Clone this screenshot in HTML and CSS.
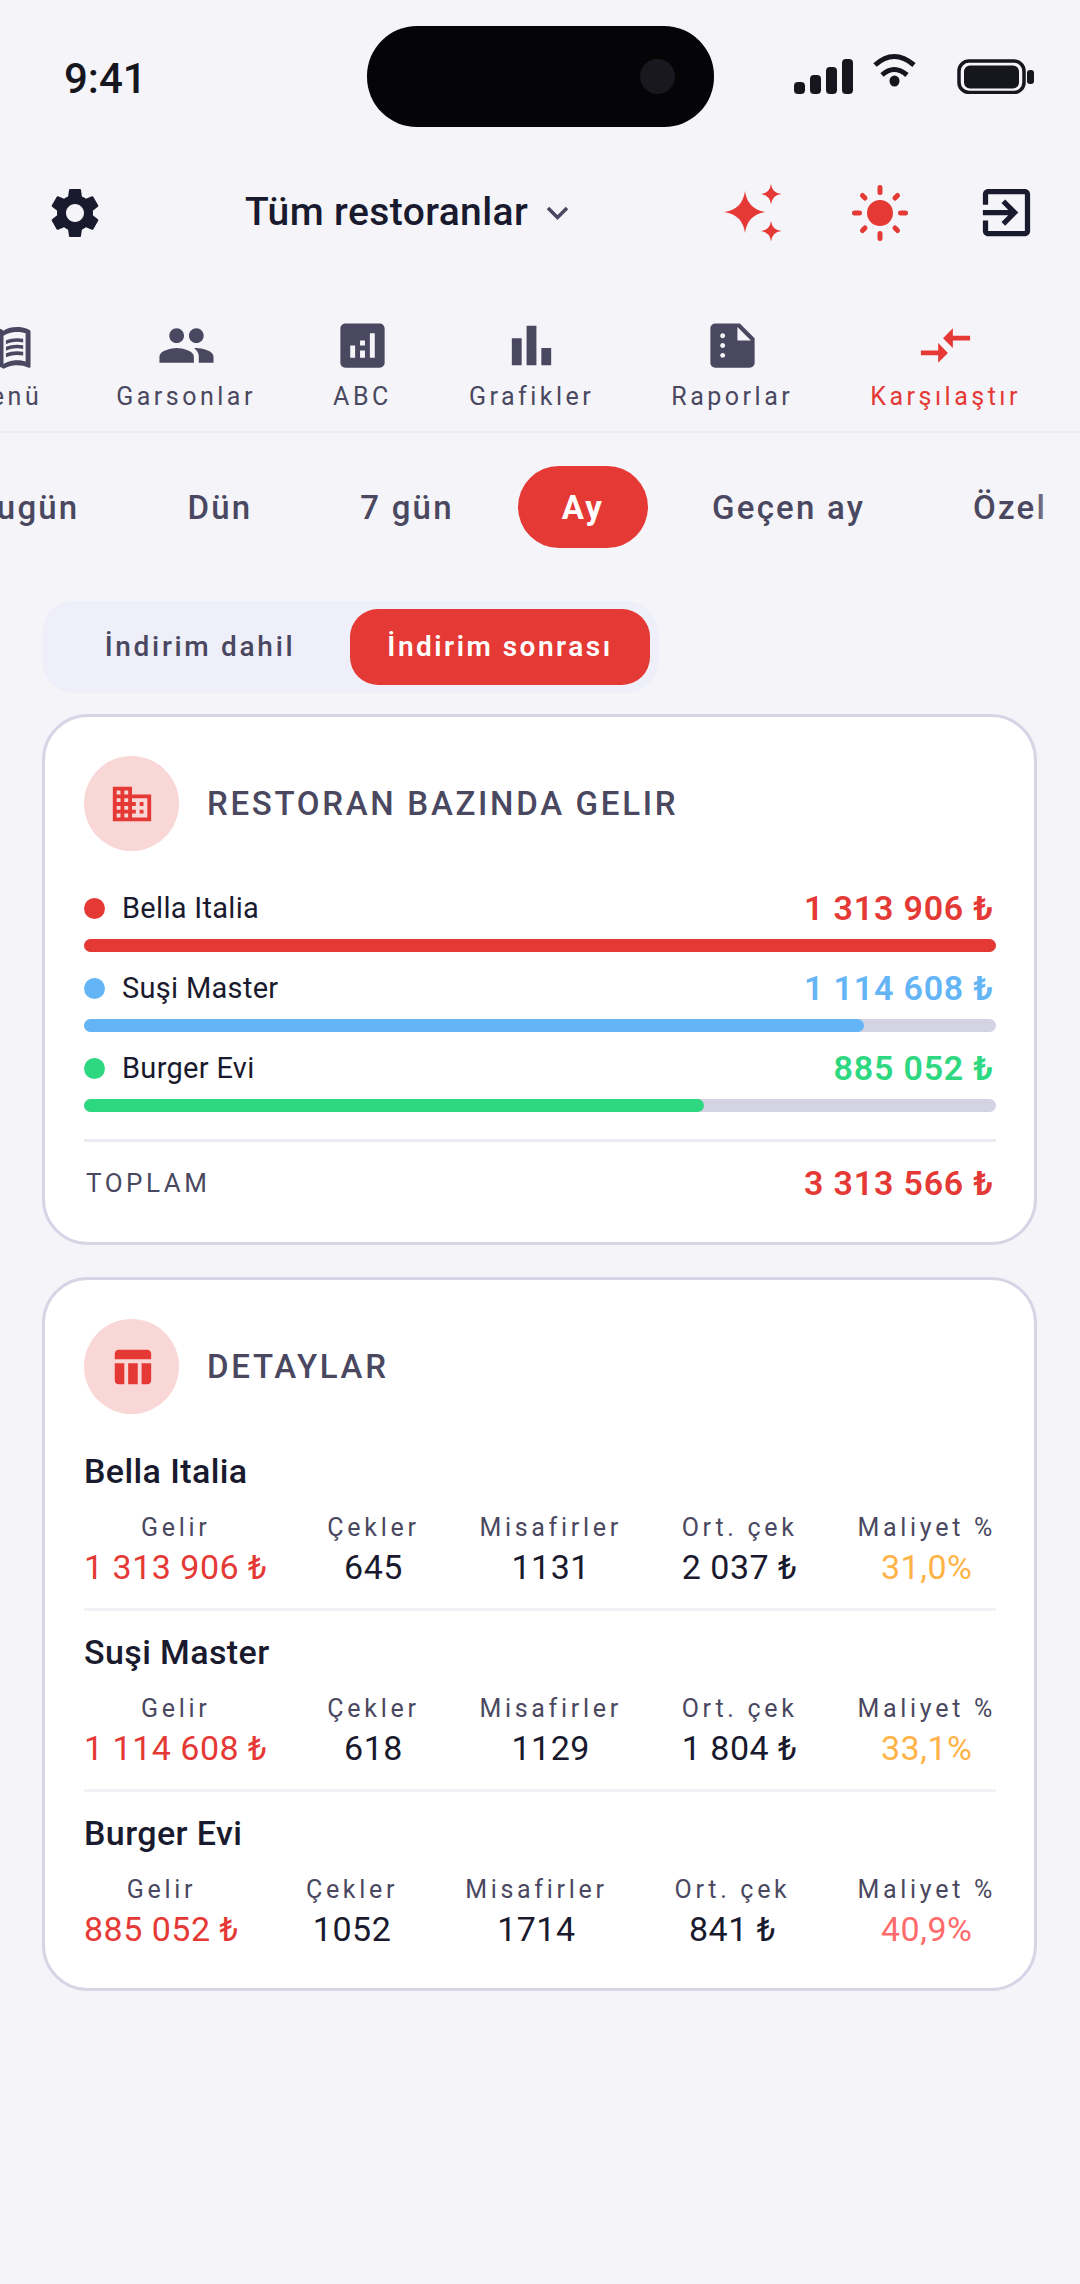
FILE: index.html

```html
<!DOCTYPE html>
<html lang="tr">
<head>
  <meta charset="UTF-8" />
  <meta name="viewport" content="width=device-width, initial-scale=1.0"/>
  <title>Karşılaştır</title>
  <link rel="stylesheet" href="styles.css">
</head>
<body>
  <div class="status">
    <div class="time">9:41</div>
    <div class="island"><span class="camera"></span></div>
    <svg class="status-icons" width="240" height="42" viewBox="0 0 240 42">
      <rect x="0" y="30" width="11" height="12" rx="4"/>
      <rect x="16" y="23" width="11" height="19" rx="4"/>
      <rect x="32" y="15" width="11" height="27" rx="4"/>
      <rect x="48" y="7" width="11" height="35" rx="4"/>
      <path d="M81 13 Q100 -4 120 13 M88 23 Q100 12 113 23" fill="none" stroke="#16161f" stroke-width="5"/>
      <ellipse cx="100.500" cy="29" rx="5" ry="5.500"/>
      <rect x="165" y="9" width="65" height="31.500" rx="10" fill="none" stroke="#16161f" stroke-width="3.500"/>
      <rect x="170" y="13.500" width="55" height="23" rx="6"/>
      <rect x="233" y="18" width="7" height="14" rx="3"/>
    </svg>
  </div>

  <div class="topbar">
    <svg class="icon-gear" viewBox="0 0 24 24"><path d="M19.14 12.94c.04-.3.06-.61.06-.94 0-.32-.02-.64-.07-.94l2.03-1.58c.18-.14.23-.41.12-.61l-1.92-3.32c-.12-.22-.37-.29-.59-.22l-2.39.96c-.5-.38-1.03-.7-1.62-.94l-.36-2.54c-.04-.24-.24-.41-.48-.41h-3.84c-.24 0-.43.17-.47.41l-.36 2.54c-.59.24-1.13.57-1.62.94l-2.39-.96c-.22-.08-.47 0-.59.22L2.74 8.87c-.12.21-.08.47.12.61l2.03 1.58c-.05.3-.09.63-.09.94s.02.64.07.94l-2.03 1.58c-.18.14-.23.41-.12.61l1.92 3.32c.12.22.37.29.59.22l2.39-.96c.5.38 1.03.7 1.62.94l.36 2.54c.05.24.24.41.48.41h3.84c.24 0 .44-.17.47-.41l.36-2.54c.59-.24 1.13-.56 1.62-.94l2.39.96c.22.08.47 0 .59-.22l1.92-3.32c.12-.22.07-.47-.12-.61l-2.01-1.58zM12 15.6c-1.98 0-3.6-1.62-3.6-3.6s1.62-3.6 3.6-3.6 3.6 1.62 3.6 3.6-1.62 3.6-3.6 3.6z"/></svg>
    <div class="picker">
      <span>Tüm restoranlar</span>
      <svg class="chevron" width="23" height="14" viewBox="0 0 23 14"><path d="M2 2 L11.500 11.500 L21 2" fill="none" stroke="#4a4860" stroke-width="3.500"/></svg>
    </div>
    <svg class="icon-sparkle" width="58" height="58" viewBox="0 0 58 58">
      <path d="M21 7 Q23.500 25.500 42 28 Q23.500 30.500 21 49 Q18.500 30.500 0 28 Q18.500 25.500 21 7Z"/>
      <path d="M47 0 Q48 9 57.500 10 Q48 11 47 20.500 Q46 11 36.500 10 Q46 9 47 0Z"/>
      <path d="M47 37 Q48 46 57.500 47 Q48 48 47 57.500 Q46 48 36.500 47 Q46 46 47 37Z"/>
    </svg>
    <svg class="icon-sun" width="58" height="58" viewBox="0 0 58 58">
      <circle cx="29" cy="29" r="13"/>
      <path d="M29 3.500v5M29 49.500v5M3.500 29h5M49.500 29h5M11.500 11.500l2.500 2.500M44 44l2.500 2.500M11.500 46.500l2.500-2.500M44 14l2.500-2.500" fill="none" stroke="#e53935" stroke-width="5" stroke-linecap="round"/>
    </svg>
    <svg class="icon-exit" viewBox="0 0 24 24"><path d="M10.090 15.590L11.500 17l5-5-5-5-1.410 1.410L12.670 11H3v2h9.670l-2.580 2.590zM19 3H5c-1.110 0-2 .9-2 2v4h2V5h14v14H5v-4H3v4c0 1.100.89 2 2 2h14c1.100 0 2-.9 2-2V5c0-1.100-.9-2-2-2z"/></svg>
  </div>

  <div class="nav">
    <div class="nav-item">
      <svg viewBox="0 0 24 24"><path d="M21 5c-1.110-.35-2.330-.5-3.500-.5-1.950 0-4.050.4-5.500 1.500-1.450-1.100-3.550-1.500-5.500-1.500S2.450 4.900 1 6v14.650c0 .25.25.5.5.5.1 0 .15-.05.25-.05C3.100 20.450 5.050 20 6.500 20c1.950 0 4.050.4 5.500 1.500 1.350-.85 3.800-1.500 5.500-1.500 1.650 0 3.350.3 4.750 1.050.1.05.15.05.25.05.25 0 .5-.25.5-.5V6c-.6-.45-1.250-.75-2-1zm0 13.500c-1.100-.35-2.300-.5-3.500-.5-1.700 0-4.150.65-5.500 1.500V8c1.350-.85 3.800-1.500 5.500-1.500 1.200 0 2.400.15 3.500.5v11.500z"/><path d="M17.500 10.500c.88 0 1.730.09 2.500.26V9.240c-.79-.15-1.640-.24-2.500-.24-1.700 0-3.240.29-4.500.83v1.660c1.130-.64 2.700-.99 4.500-.99zM13 12.490v1.660c1.130-.64 2.700-.99 4.500-.99.88 0 1.730.09 2.500.26V11.900c-.79-.15-1.640-.24-2.500-.24-1.700 0-3.240.3-4.500.83zM17.500 14.330c-1.700 0-3.240.29-4.500.83v1.660c1.130-.64 2.700-.99 4.500-.99.88 0 1.730.09 2.500.26v-1.520c-.79-.16-1.640-.24-2.500-.24z"/></svg>
      <span>Menü</span>
    </div>
    <div class="nav-item">
      <svg viewBox="0 0 24 24"><path d="M16 11c1.660 0 2.990-1.340 2.990-3S17.660 5 16 5c-1.660 0-3 1.340-3 3s1.340 3 3 3zm-8 0c1.660 0 2.990-1.340 2.990-3S9.660 5 8 5C6.340 5 5 6.340 5 8s1.340 3 3 3zm0 2c-2.330 0-7 1.170-7 3.500V19h14v-2.500c0-2.330-4.670-3.500-7-3.500zm8 0c-.29 0-.62.02-.97.05 1.160.84 1.970 1.970 1.970 3.450V19h6v-2.500c0-2.330-4.670-3.500-7-3.500z"/></svg>
      <span>Garsonlar</span>
    </div>
    <div class="nav-item">
      <svg viewBox="0 0 24 24"><path d="M19 3H5c-1.100 0-2 .9-2 2v14c0 1.100.9 2 2 2h14c1.100 0 2-.9 2-2V5c0-1.100-.9-2-2-2zM9 17H7v-5h2v5zm4 0h-2v-3h2v3zm0-5h-2v-2h2v2zm4 5h-2V7h2v10z"/></svg>
      <span>ABC</span>
    </div>
    <div class="nav-item">
      <svg viewBox="0 0 24 24"><path d="M4 9h4v11H4zM16 13h4v7h-4zM10 4h4v16h-4z"/></svg>
      <span>Grafikler</span>
    </div>
    <div class="nav-item">
      <svg viewBox="0 0 24 24"><path d="M15 3H5c-1.100 0-1.990.9-1.990 2L3 19c0 1.100.89 2 1.990 2H19c1.100 0 2-.9 2-2V9l-6-6zM8 17c-.55 0-1-.45-1-1s.45-1 1-1 1 .45 1 1-.45 1-1 1zm0-4c-.55 0-1-.45-1-1s.45-1 1-1 1 .45 1 1-.45 1-1 1zm0-4c-.55 0-1-.45-1-1s.45-1 1-1 1 .45 1 1-.45 1-1 1zm6 1V4.500l5.500 5.500H14z"/></svg>
      <span>Raporlar</span>
    </div>
    <div class="nav-item active">
      <svg viewBox="0 0 24 24"><path d="M9.010 14H2v2h7.010v3L13 15l-3.990-4v3zm5.980-1v-3H22V8h-7.010V5L11 9l3.990 4z"/></svg>
      <span>Karşılaştır</span>
    </div>
  </div>

  <div class="periods">
    <div class="period">Bugün</div>
    <div class="period">Dün</div>
    <div class="period">7 gün</div>
    <div class="period active">Ay</div>
    <div class="period">Geçen ay</div>
    <div class="period">Özel</div>
  </div>

  <div class="toggle">
    <div class="toggle-btn">İndirim dahil</div>
    <div class="toggle-btn active">İndirim sonrası</div>
  </div>

  <div class="card">
    <div class="card-head">
      <div class="card-icon">
        <svg viewBox="0 0 24 24"><path d="M12 7V3H2v18h20V7H12zM6 19H4v-2h2v2zm0-4H4v-2h2v2zm0-4H4V9h2v2zm0-4H4V5h2v2zm4 12H8v-2h2v2zm0-4H8v-2h2v2zm0-4H8V9h2v2zm0-4H8V5h2v2zm10 12h-8v-2h2v-2h-2v-2h2v-2h-2V9h8v10zm-2-8h-2v2h2v-2zm0 4h-2v2h2v-2z"/></svg>
      </div>
      <h2>RESTORAN BAZINDA GELIR</h2>
    </div>
    <div class="rows">
      <div class="row red">
        <div class="row-top"><span class="dot"></span><span class="row-name">Bella Italia</span><span class="row-value">1 313 906 ₺</span></div>
        <div class="track"><div class="fill" style="width: 100%"></div></div>
      </div>
      <div class="row blue">
        <div class="row-top"><span class="dot"></span><span class="row-name">Suşi Master</span><span class="row-value">1 114 608 ₺</span></div>
        <div class="track"><div class="fill" style="width: 85.500%"></div></div>
      </div>
      <div class="row green">
        <div class="row-top"><span class="dot"></span><span class="row-name">Burger Evi</span><span class="row-value">885 052 ₺</span></div>
        <div class="track"><div class="fill" style="width: 68%"></div></div>
      </div>
    </div>
    <div class="total">
      <span class="total-label">TOPLAM</span>
      <span class="total-value">3 313 566 ₺</span>
    </div>
  </div>

  <div class="card">
    <div class="card-head">
      <div class="card-icon">
        <svg viewBox="0 0 24 24"><path d="M10 10.020h5V21h-5zM17 21h3c1.100 0 2-.9 2-2v-9h-5v11zm3-18H5c-1.100 0-2 .9-2 2v3h19V5c0-1.100-.9-2-2-2zM3 19c0 1.100.9 2 2 2h3V10H3v9z"/></svg>
      </div>
      <h2>DETAYLAR</h2>
    </div>

    <div class="group">
      <h3>Bella Italia</h3>
      <div class="stats">
        <div class="stat"><span class="stat-label">Gelir</span><span class="stat-value money">1 313 906 ₺</span></div>
        <div class="stat"><span class="stat-label">Çekler</span><span class="stat-value">645</span></div>
        <div class="stat"><span class="stat-label">Misafirler</span><span class="stat-value">1131</span></div>
        <div class="stat"><span class="stat-label">Ort. çek</span><span class="stat-value">2 037 ₺</span></div>
        <div class="stat"><span class="stat-label">Maliyet %</span><span class="stat-value warn">31,0%</span></div>
      </div>
    </div>
    <div class="group">
      <h3>Suşi Master</h3>
      <div class="stats">
        <div class="stat"><span class="stat-label">Gelir</span><span class="stat-value money">1 114 608 ₺</span></div>
        <div class="stat"><span class="stat-label">Çekler</span><span class="stat-value">618</span></div>
        <div class="stat"><span class="stat-label">Misafirler</span><span class="stat-value">1129</span></div>
        <div class="stat"><span class="stat-label">Ort. çek</span><span class="stat-value">1 804 ₺</span></div>
        <div class="stat"><span class="stat-label">Maliyet %</span><span class="stat-value warn">33,1%</span></div>
      </div>
    </div>
    <div class="group">
      <h3>Burger Evi</h3>
      <div class="stats">
        <div class="stat"><span class="stat-label">Gelir</span><span class="stat-value money">885 052 ₺</span></div>
        <div class="stat"><span class="stat-label">Çekler</span><span class="stat-value">1052</span></div>
        <div class="stat"><span class="stat-label">Misafirler</span><span class="stat-value">1714</span></div>
        <div class="stat"><span class="stat-label">Ort. çek</span><span class="stat-value">841 ₺</span></div>
        <div class="stat"><span class="stat-label">Maliyet %</span><span class="stat-value bad">40,9%</span></div>
      </div>
    </div>
  </div>
</body>
</html>
```

FILE: styles.css

```css
* {
  box-sizing: border-box;
}
html, body {
  overflow: hidden;
}
body {
  margin: 0;
  width: 1080px;
  height: 2284px;
  background-color: #f4f4f9;
  color: #1a1a2e;
  font-family: Roboto, "Liberation Sans", sans-serif;
}

/* status bar */
.status {
  display: flex;
  align-items: flex-start;
  height: 155px;
  padding: 26px 0 0 64px;
}
.time {
  width: 303px;
  height: 101px;
  line-height: 106px;
  font-size: 42px;
  font-weight: 500;
  color: #16161f;
}
.island {
  display: flex;
  align-items: center;
  justify-content: flex-end;
  width: 347px;
  height: 101px;
  padding-right: 39px;
  border-radius: 50px;
  background-color: #050507;
}
.camera {
  width: 35px;
  height: 35px;
  border-radius: 50%;
  background-color: #18181e;
}
.status-icons {
  margin: 26px 0 0 80px;
  fill: #16161f;
}

/* top bar */
.topbar {
  display: flex;
  align-items: center;
  height: 115px;
  padding-left: 45px;
}
.icon-gear {
  width: 60px;
  height: 60px;
  fill: #1a1a2e;
}
.picker {
  display: flex;
  align-items: center;
  gap: 18px;
  margin-left: 140px;
  margin-top: -2px;
  width: 479px;
  font-size: 39px;
  font-weight: 500;
  letter-spacing: 0.400px;
}
.chevron {
  margin-top: 2px;
}
.icon-sparkle, .icon-sun {
  fill: #e53935;
}
.icon-sun {
  margin-left: 69px;
}
.icon-exit {
  width: 63px;
  height: 63px;
  margin-left: 66px;
  fill: #1a1a2e;
}

/* nav tabs */
.nav {
  display: flex;
  justify-content: flex-end;
  gap: 77px;
  height: 163px;
  padding: 46px 59px 0 0;
  border-bottom: 2px solid #ecebf4;
  overflow: hidden;
}
.nav-item {
  display: flex;
  flex-direction: column;
  align-items: center;
  flex-shrink: 0;
  gap: 7px;
  color: #4a4860;
  font-size: 25px;
  line-height: 30px;
  letter-spacing: 3.500px;
}
.nav-item:first-child {
  margin-right: -3px;
}
.nav-item svg {
  width: 59px;
  height: 59px;
  fill: #4a4860;
}
.nav-item.active {
  color: #e53935;
}
.nav-item.active svg {
  fill: #e53935;
}

/* period tabs */
.periods {
  position: relative;
  display: flex;
  justify-content: flex-end;
  gap: 20px;
  padding: 33px 0 0;
  margin-right: -11px;
  overflow: hidden;
}
.periods::after {
  content: "";
  position: absolute;
  top: 0;
  right: 0;
  bottom: 0;
  width: 60px;
  background: linear-gradient(to right, rgba(244, 244, 249, 0), #f4f4f9 80%);
}
.period {
  flex-shrink: 0;
  height: 82px;
  padding: 0 44px;
  border-radius: 41px;
  line-height: 84px;
  font-size: 33px;
  font-weight: 500;
  letter-spacing: 2.200px;
  color: #4a4860;
}
.period.active {
  background-color: #e53935;
  color: #fff;
  font-weight: 700;
}

/* discount toggle */
.toggle {
  display: flex;
  width: 616px;
  height: 92px;
  margin: 53px 0 21px 42px;
  padding: 8px;
  border-radius: 32px;
  background-color: #eeeff8;
}
.toggle-btn {
  flex: 1;
  border-radius: 28px;
  text-align: center;
  line-height: 76px;
  font-size: 28px;
  font-weight: 500;
  letter-spacing: 2.700px;
  color: #4a4860;
}
.toggle-btn.active {
  background-color: #e53935;
  color: #fff;
  font-weight: 600;
  letter-spacing: 2.500px;
}

/* cards */
.card {
  width: 995px;
  margin: 0 0 32px 42px;
  padding: 39px 38px 39px 39px;
  border: 3px solid #d6d5e6;
  border-radius: 46px;
  background-color: #fff;
}
.card-head {
  display: flex;
  align-items: center;
  gap: 28px;
}
.card-icon {
  display: flex;
  align-items: center;
  justify-content: center;
  width: 95px;
  height: 95px;
  border-radius: 50%;
  background-color: #fad7d7;
}
.card-icon svg {
  width: 46px;
  height: 46px;
  fill: #e53935;
}
.card-head h2 {
  margin: 0;
  font-size: 33px;
  font-weight: 500;
  letter-spacing: 2.700px;
  color: #4a4860;
}

/* revenue rows */
.rows {
  margin-top: 37px;
}
.row {
  margin-bottom: 16px;
}
.row-top {
  display: flex;
  align-items: center;
  height: 40px;
  margin-bottom: 11px;
}
.dot {
  width: 21px;
  height: 21px;
  margin-right: 17px;
  border-radius: 50%;
}
.row-name {
  flex: 1;
  font-size: 29px;
  letter-spacing: 0.300px;
}
.row-value, .total-value {
  margin-right: 2px;
  font-size: 34px;
  font-weight: 600;
  letter-spacing: 0.800px;
}
.track {
  height: 13px;
  border-radius: 7px;
  background-color: #d4d3e3;
}
.fill {
  height: 100%;
  border-radius: 7px;
}
.red .dot, .red .fill { background-color: #e53935; }
.blue .dot, .blue .fill { background-color: #64b5f6; }
.green .dot, .green .fill { background-color: #2ed880; }
.red .row-value { color: #e53935; }
.blue .row-value { color: #64b5f6; }
.green .row-value { color: #2ed880; }

.total {
  display: flex;
  align-items: center;
  justify-content: space-between;
  height: 64px;
  margin-top: 27px;
  padding-top: 21px;
  border-top: 3px solid #ecebf3;
}
.total-label {
  padding-left: 2px;
  font-size: 26px;
  letter-spacing: 3.500px;
  color: #4a4860;
}
.total-value {
  color: #e53935;
}

/* detail groups */
.group {
  margin-top: 35px;
}
.group + .group {
  margin-top: 19px;
  padding-top: 19px;
  border-top: 3px solid #f1f1f6;
}
.group h3 {
  margin: 0 0 18px;
  font-size: 34px;
  line-height: 44px;
  font-weight: 460;
  letter-spacing: 0.400px;
}
.stats {
  display: flex;
  justify-content: space-between;
}
.stat {
  display: flex;
  flex-direction: column;
  align-items: center;
}
.stat-label {
  font-size: 25px;
  line-height: 34px;
  letter-spacing: 3.700px;
  color: #4a4860;
}
.stat-value {
  font-size: 34px;
  line-height: 44px;
  font-weight: 450;
  letter-spacing: 0.500px;
}
.stat-value.money, .stat-value.warn, .stat-value.bad {
  font-weight: 400;
}
.money { color: #e53935; }
.warn { color: #ffb347; }
.bad { color: #ff6b6b; }
.card:last-child {
  padding-bottom: 37px;
}
```
